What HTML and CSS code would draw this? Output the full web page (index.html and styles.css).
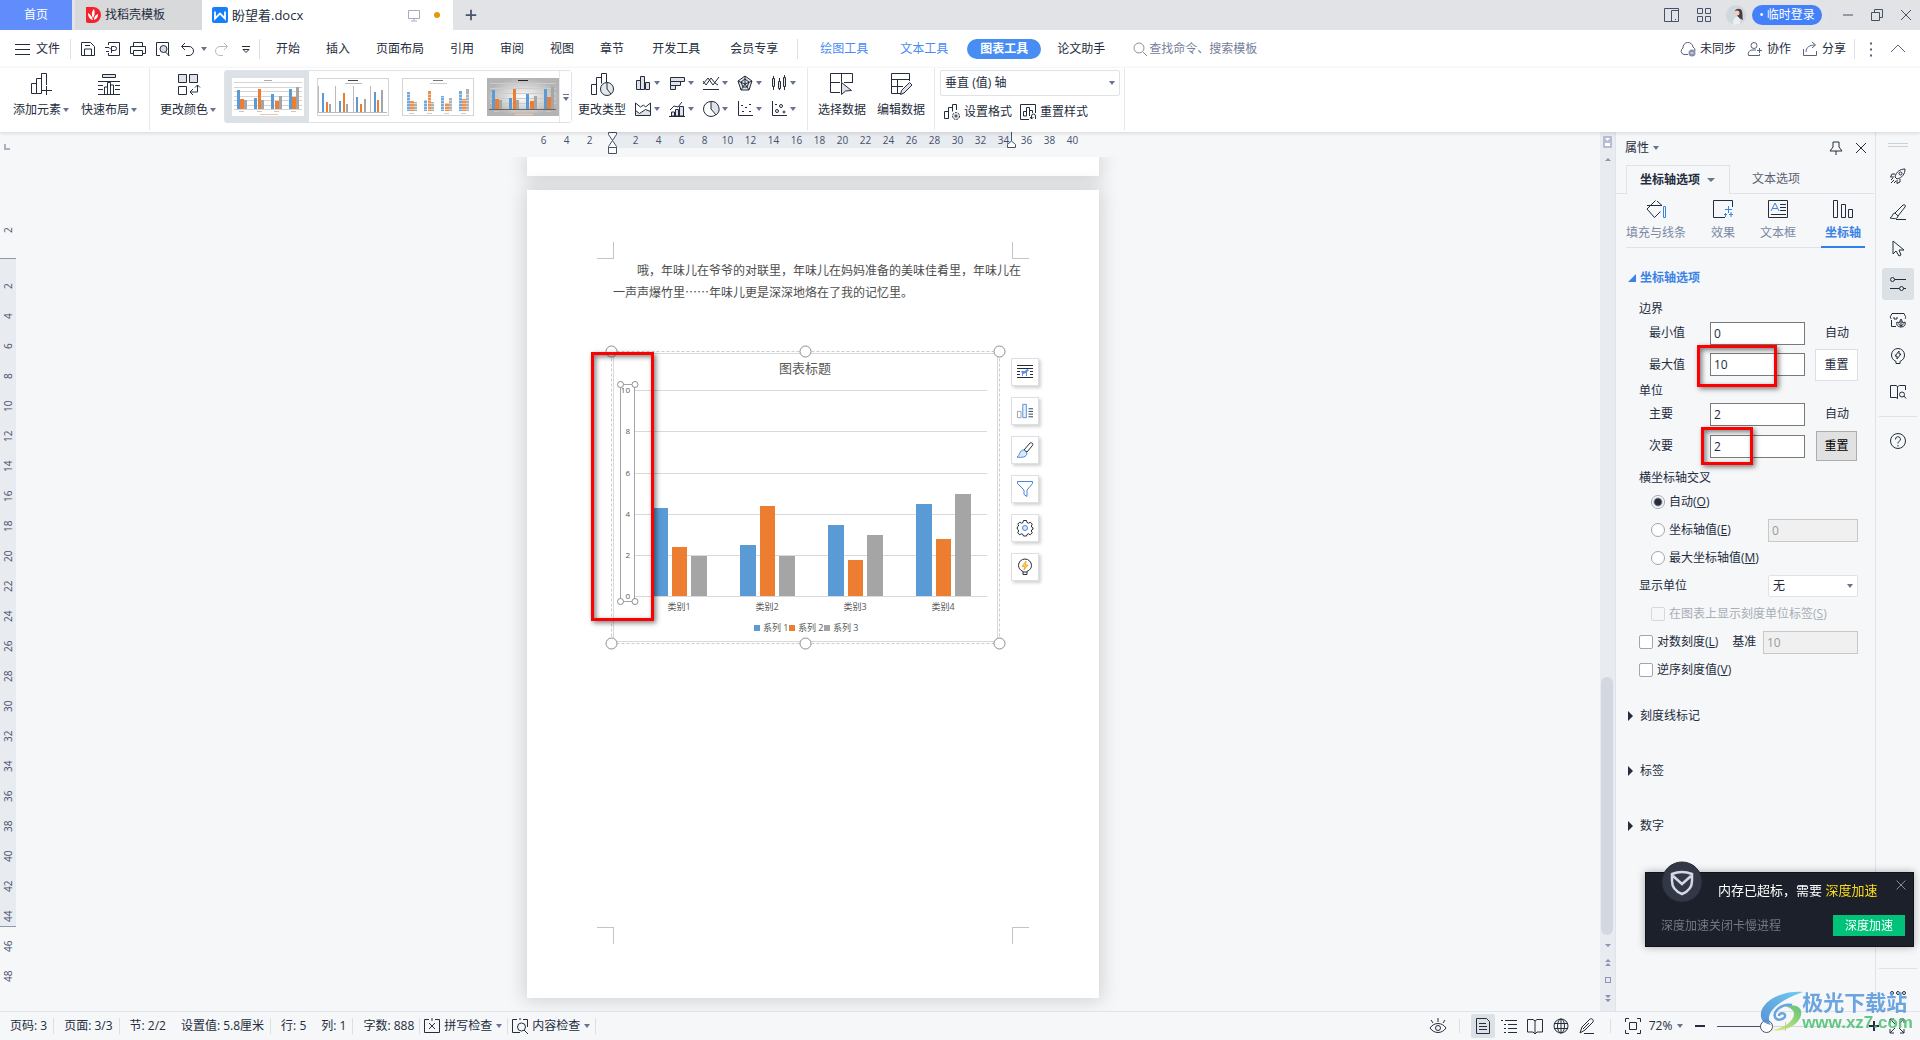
FILE: index.html
```html
<!DOCTYPE html>
<html lang="zh-CN">
<head>
<meta charset="utf-8">
<title>盼望着.docx</title>
<link rel="stylesheet" href="styles.css">
</head>
<body>
<svg class="defs" aria-hidden="true">
  <symbol id="bars" viewBox="0 0 72 38">
    <path fill="#5b9bd5" d="M5 31v-19h3v19zM22 31v-11h3v11zM39 31v-15h3v15zM57 31v-20h3v20z"/>
    <path fill="#ed7d31" d="M8 31v-10h4v10zM26 31v-20h3v20zM43 31v-8h4v8zM60 31v-12h4v12z"/>
    <path fill="#a5a5a5" d="M12 31v-9h3v9zM29 31v-9h3v9zM47 31v-13h3v13zM64 31v-22h3v22z"/>
    <path stroke="#c8c8c8" d="M7 33.500h5M25 33.500h5M42 33.500h5M59 33.500h5"/>
    <path stroke="#f2c5a5" d="M28 36.500h18"/>
  </symbol>
  <symbol id="thinbars" viewBox="0 0 72 38">
    <path fill="#5b9bd5" d="M5 34v-19h2v19zM22 34v-11h2v11zM39 34v-15h2v15zM57 34v-20h2v20z"/>
    <path fill="#ed7d31" d="M9 34v-10h2v10zM26 34v-19h2v19zM43 34v-8h2v8zM60 34v-12h2v12z"/>
    <path fill="#a5a5a5" d="M12 34v-8h2v8zM29 34v-8h2v8zM47 34v-13h2v13zM64 34v-22h2v22z"/>
  </symbol>
</svg>

<header class="titlebar">
  <button class="tab home">首页</button>
  <button class="tab template"><svg class="logo" viewBox="0 0 16 16"><path fill="#f5222d" d="M1 0h7a8 8 0 0 1 0 16H3a2 2 0 0 1-2-2z"/><path fill="#fff" d="M8 13C4 12 3 9 3 6c2 1 4 3 5 7zM8 11C6 7 7 4 9 2c1 3 1 6-1 9zM9 13c0-3 1-5 4-6 0 3-1 5-4 6z"/></svg>找稻壳模板</button>
  <button class="tab doc"><svg class="logo" viewBox="0 0 16 16"><rect width="16" height="16" rx="2" fill="#1680fb"/><path fill="none" stroke="#fff" stroke-width="1.800" d="M3 4.500v7l5-5 5 5v-7"/></svg><span>盼望着.docx</span><svg class="icon screen" viewBox="0 0 16 16"><path d="M2.500 3.500h11v8h-11zM8 11.500v2M5 14h6"/></svg><i class="dot"></i></button>
  <button class="newtab" aria-label="新建"><svg class="icon bold" viewBox="0 0 16 16"><path d="M8 2v12M2 8h12"/></svg></button>
  <div class="window-tools">
    <svg class="icon" viewBox="0 0 16 16"><path d="M.5 1.500h14v13H.5zM7.500 14V3.500h7M11 12.500h1"/></svg>
    <svg class="icon grid" viewBox="0 0 16 16"><path d="M1.500 1.500h5v5h-5zM9.500 1.500h5v5h-5zM1.500 9.500h5v5h-5zM9.500 9.500h5v5h-5z"/></svg>
    <svg class="avatar" viewBox="0 0 20 20"><circle cx="10" cy="10" r="10" fill="#cfd8dc"/><path fill="#4a3c3c" d="M9 6c1-3 6-3 7 0 1 4 0 6 1 9l-4-2-3-4z"/><circle cx="11" cy="8" r="2.500" fill="#f0cdbd"/><path fill="#e8f1f4" d="M7 20c0-6 2-9 5-8 2 1 2 5 2 7z"/></svg>
    <button class="login">• 临时登录</button>
    <i class="sep"></i>
    <button class="win" aria-label="最小化"><svg class="icon" viewBox="0 0 16 16"><path d="M3 8h10"/></svg></button>
    <button class="win" aria-label="还原"><svg class="icon" viewBox="0 0 16 16"><path d="M2.500 5.500h8v8h-8zM5.500 5.500v-3h8v8h-3"/></svg></button>
    <button class="win" aria-label="关闭"><svg class="icon" viewBox="0 0 16 16"><path d="M3 3l10 10M13 3L3 13"/></svg></button>
  </div>
</header>

<nav class="menubar">
  <button class="file"><svg class="icon" viewBox="0 0 16 16"><path d="M0 3.500h15M0 8.500h15M0 13.500h15"/></svg>文件</button>
  <i class="sep"></i>
  <div class="quick">
    <svg class="icon" viewBox="0 0 16 16"><path d="M1.500 1.500h9l4 4v9h-13zM4.500 14v-6h7v6M5 4.500h5"/></svg>
    <svg class="icon" viewBox="0 0 16 16"><path d="M3.500 4V1.500h11v13h-11V12M0 6.500h4l2 2M6.500 12V5.500h3a2 2 0 0 1 0 4h-3M1 10.500h3"/></svg>
    <svg class="icon" viewBox="0 0 16 16"><path d="M3.500 5V1.500h9V5M3.500 12.500h-3v-7h15v7h-3M3.500 9.500h9v5h-9z"/></svg>
    <svg class="icon" viewBox="0 0 16 16"><path d="M5 14.500H1.500v-13h12v13M10.500 11l4 4"/><circle cx="8.500" cy="8" r="3.500" fill="#d8dce1"/></svg>
    <svg class="icon" viewBox="0 0 16 16"><path d="M5 2L1.500 5.500 5 9M2 5.500h7a4 4 0 0 1 0 9H6"/></svg>
    <i class="caret"></i>
    <svg class="icon faded" viewBox="0 0 16 16"><path d="M11 2l3.500 3.500L11 9M14 5.500H7a4 4 0 0 0 0 9h3"/></svg>
    <svg class="icon" viewBox="0 0 16 16"><path d="M4 5.500h8M5 8.500l3 3 3-3z"/></svg>
  </div>
  <i class="sep"></i>
  <div class="menus">
    <button>开始</button><button>插入</button><button>页面布局</button><button>引用</button><button>审阅</button><button>视图</button><button>章节</button><button class="wide">开发工具</button><button class="wide">会员专享</button>
  </div>
  <i class="sep"></i>
  <div class="context">
    <button>绘图工具</button><button>文本工具</button><button class="pill">图表工具</button><button class="plain">论文助手</button>
  </div>
  <label class="search"><svg class="icon" viewBox="0 0 16 16"><circle cx="7" cy="7" r="5"/><path d="M11 11l4 4"/></svg><input type="text" placeholder="查找命令、搜索模板"></label>
  <div class="share">
    <button><svg class="icon" viewBox="0 0 16 16"><path d="M8 13.500H4a3.500 3.500 0 0 1-1-6.500 5 5 0 0 1 10-1 4 4 0 0 1 2 4"/><circle cx="12" cy="12" r="3.500" fill="#8891b0" stroke="none"/><path stroke="#fff" d="M10.500 12h3"/></svg>未同步</button>
    <button><svg class="icon" viewBox="0 0 16 16"><circle cx="7" cy="4.500" r="3"/><path d="M9 9H5a4 4 0 0 0-3.500 5.500h11V13M10 9.500h5M12.500 7v5"/></svg>协作</button>
    <button><svg class="icon" viewBox="0 0 16 16"><path d="M1.500 8v6.500h13V10M4 11c0-5 4-7 9-7M10 1l3.500 3L10 7"/></svg>分享</button>
    <i class="sep"></i>
    <svg class="icon dots" viewBox="0 0 16 16"><path d="M7 2.500h2M7 8.500h2M7 14.500h2"/></svg>
    <svg class="icon" viewBox="0 0 16 16"><path d="M1 11l7-7 7 7"/></svg>
  </div>
</nav>

<section class="ribbon">
  <div class="group first">
    <button class="big"><svg class="icon24" viewBox="0 0 24 24"><path d="M2.500 21.500v-10h5v10zM7.500 21.500v-15h5v15zM12.500 13V1.500h5V13M17.500 14v9M13 18.500h10"/></svg><span>添加元素<i class="caret"></i></span></button>
    <button class="big"><svg class="icon24" viewBox="0 0 24 24"><path fill="#dfe3e8" d="M5.500 2.500h13v3h-13z"/><path d="M1 9.500h22M1 13.500h5M18 13.500h5M1 17.500h5M18 17.500h5M1 22.500h22M7.500 22v-7h3v7M10.500 22V10.500h3V22M13.500 22v-9h3v9"/></svg><span>快速布局<i class="caret"></i></span></button>
  </div>
  <div class="group gallery-group">
    <button class="big"><svg class="icon24" viewBox="0 0 24 24"><path fill="#dfe3e8" d="M2.500 2.500h8v8h-8zM13.500 2.500h8v8h-8z"/><path d="M2.500 14.500h8v8h-8zM21.500 13v7h-7M17 17l-3 3 3 3M19 15.500l2.500-2.500 2.500 2.500"/></svg><span>更改颜色<i class="caret"></i></span></button>
    <div class="gallery">
      <button class="thumb on" aria-label="样式 1"><svg viewBox="0 0 72 38"><rect width="72" height="38" fill="#fff"/><path stroke="#d4d4d4" d="M2 4.500h68M2 9.500h68M2 13.500h68M2 18.500h68M2 22.500h68M2 27.500h68M2 31.500h68"/><path stroke="#aaa" d="M32 2.500h8"/><use href="#bars" width="72" height="38"/></svg></button>
      <button class="thumb" aria-label="样式 2"><svg viewBox="0 0 72 38"><rect x=".5" y=".5" width="71" height="37" fill="#fff" stroke="#d4d4d4"/><path stroke="#444" d="M31 2.500h10"/><path stroke="#bbb" d="M28 5.500h17M1.500 8v27M18.500 8v27M36.500 8v27M53.500 8v27M2 34.500h68"/><use href="#thinbars" width="72" height="38"/></svg></button>
      <button class="thumb" aria-label="样式 3"><svg viewBox="0 0 72 38"><rect x=".5" y=".5" width="71" height="37" fill="#fff" stroke="#d4d4d4"/><path stroke="#777" d="M31 2.500h10"/><path stroke="#ccc" d="M28 5.500h17"/><g opacity=".85"><use href="#bars" y="2" width="72" height="38"/></g><path stroke="#fff" opacity=".5" d="M4 16.500h64M4 19.500h64M4 22.500h64M4 25.500h64M4 28.500h64M4 31.500h64"/></svg></button>
      <button class="thumb" aria-label="样式 4"><svg viewBox="0 0 72 38"><defs><radialGradient id="g"><stop offset="0" stop-color="#fff"/><stop offset="1" stop-color="#b4b4b4"/></radialGradient></defs><rect width="72" height="38" fill="url(#g)"/><path stroke="#222" d="M31 2.500h10"/><path stroke="#ccc" d="M3 5.500h66M3 10.500h66M3 15.500h66M3 20.500h66M3 25.500h66"/><use href="#bars" width="72" height="38"/><path stroke="#666" d="M2 31.500h67"/></svg></button>
      <button class="expand" aria-label="更多样式"><svg class="icon10" viewBox="0 0 10 10"><path d="M2 2.500h6"/><path class="fill" d="M2 5h6L5 9z"/></svg></button>
    </div>
    <button class="big type"><svg class="icon24" viewBox="0 0 24 24"><path d="M1.500 22.500v-10h5v10zM6.500 22.500v-17h5v6M11.500 10V1.500h5V10"/><circle cx="17" cy="17" r="6.500" fill="#e4e8ec"/><path d="M17 10.500V17l4 5"/></svg><span>更改类型</span></button>
    <div class="types">
      <button aria-label="柱形图"><svg class="icon" viewBox="0 0 16 16"><path fill="#dfe3e8" d="M1.500 14.500v-9h4v9zM5.500 14.500v-13h4v13zM10.500 14.500v-7h4v7z"/></svg><i class="caret"></i></button>
      <button aria-label="条形图"><svg class="icon" viewBox="0 0 16 16"><path fill="#dfe3e8" d="M1.500 2.500h14v4h-14zM1.500 6.500h10v4h-10zM1.500 10.500h5v4h-5z"/></svg><i class="caret"></i></button>
      <button aria-label="折线图"><svg class="icon" viewBox="0 0 16 16"><path d="M0 14.500h16M0 9l5-6 5 7 6-8M0 6l3 4 5-7 4 5 3 2"/></svg><i class="caret"></i></button>
      <button aria-label="雷达图"><svg class="icon" viewBox="0 0 16 16"><path fill="#dfe3e8" d="M8 1l7 5-3 9H4L1 6z"/><path d="M8 4l4 3-2 5H6L4 7zM8 1v8M1 6l7 3 7-3M4 15l4-6 4 6"/></svg><i class="caret"></i></button>
      <button aria-label="股价图"><svg class="icon" viewBox="0 0 16 16"><path fill="#dfe3e8" d="M1.500 3.500h2v8h-2zM7.500 6.500h2v7h-2zM12.500 2.500h2v9h-2z"/><path d="M2.500 1v2M2.500 12v3M8.500 3v3M8.500 14v1M13.500 0v2M13.500 12v3"/></svg><i class="caret"></i></button>
      <button aria-label="面积图"><svg class="icon" viewBox="0 0 16 16"><path fill="#dfe3e8" d="M.5 9.500l4 3 6-4 5 2v4H.5z"/><path d="M.5 14V2l5 4 3-2 2 2 5-4v12"/></svg><i class="caret"></i></button>
      <button aria-label="组合图"><svg class="icon" viewBox="0 0 16 16"><path fill="#dfe3e8" d="M2.500 15v-4h3v4zM6.500 15V8.500h3V15zM10.500 15V5.500h4V15z"/><path d="M1 9l4-4 4 1 4-5M0 15.500h16"/></svg><i class="caret"></i></button>
      <button aria-label="饼图"><svg class="icon" viewBox="0 0 16 16"><circle cx="8" cy="8" r="7.500"/><path fill="#dfe3e8" d="M8 .5V8l5 6A7.500 7.500 0 0 0 8 .5z"/></svg><i class="caret"></i></button>
      <button aria-label="散点图"><svg class="icon" viewBox="0 0 16 16"><path d="M1.500 0v14.500H16M5 10.500h2M8 6.500h2M12 3.500h2M12 10.500h2M4 4.500h2"/></svg><i class="caret"></i></button>
      <button aria-label="气泡图"><svg class="icon" viewBox="0 0 16 16"><path d="M1.500 0v14.500H16M4 3.500h2"/><circle cx="6" cy="10" r="1.500"/><circle cx="10" cy="5" r="1.500"/><circle cx="13" cy="11" r="1"/></svg><i class="caret"></i></button>
    </div>
  </div>
  <div class="group data">
    <button class="big"><svg class="icon24" viewBox="0 0 24 24"><path d="M10 20.500H.5v-19h22V11M.5 10.500H10M11.500 2v8M14 10.500h8"/><path fill="#dfe3e8" d="M11.500 10.500v12l4-3.500 6-.5z"/></svg><span>选择数据</span></button>
    <button class="big"><svg class="icon24" viewBox="0 0 24 24"><path d="M12 21.500H2.500v-20h18V9M3 7.500h17M3 14.500h11M8.500 8v13"/><path fill="#dfe3e8" d="M11.500 22.500l1-4 8-8 2.500 2.500-8 8z"/></svg><span>编辑数据</span></button>
  </div>
  <div class="group format">
    <select aria-label="图表元素"><option>垂直 (值) 轴</option></select>
    <div class="format-row">
      <button><svg class="icon" viewBox="0 0 16 16"><path d="M.5 14.500v-7h4v7zM4.500 14.500v-11h4v4M8.500 6V.5h4V6"/><circle cx="12" cy="12" r="3.500" fill="#dfe3e8" stroke-dasharray="2 1"/><circle cx="12" cy="12" r="1"/></svg>设置格式</button>
      <button><svg class="icon" viewBox="0 0 16 16"><path d="M9 15.500H.5V.5h15V9M3.500 12V7.500h3V12zM6.500 12V3.500h3V12M9.500 9V6.500h3V9M11.500 15v-3a2 2 0 0 1 4 0v3M10 13l1.500 2 2-2"/></svg>重置样式</button>
    </div>
  </div>
</section>

<main class="workspace">
  <div class="vruler">
    <i class="corner"></i>
    <span>2</span>
    <div class="vband"><span>2</span><span>4</span><span>6</span><span>8</span><span>10</span><span>12</span><span>14</span><span>16</span><span>18</span><span>20</span><span>22</span><span>24</span><span>26</span><span>28</span><span>30</span><span>32</span><span>34</span><span>36</span><span>38</span><span>40</span><span>42</span><span>44</span></div>
    <span>46</span><span>48</span>
  </div>

  <div class="canvas">
    <div class="hruler">
      <span>6</span><span>4</span><span>2</span><span><svg class="marker" viewBox="0 0 9 25"><path d="M.5.500h8v2l-4 6 4 6v1h-8v-1l4-6-4-6zM.5 15.500h8v6h-8z"/></svg></span><span>2</span><span>4</span><span>6</span><span>8</span><span>10</span><span>12</span><span>14</span><span>16</span><span>18</span><span>20</span><span>22</span><span>24</span><span>26</span><span>28</span><span>30</span><span>32</span><span class="edge">34<svg class="marker short" viewBox="0 0 9 16"><path d="M4.500 0v9M.5 15.500v-3l4-3.500 4 3.500v3z"/></svg></span><span>36</span><span>38</span><span>40</span>
    </div>
    <div class="pages">
      <div class="page previous"></div>
      <article class="page">
        <i class="mark tl"></i><i class="mark tr"></i><i class="mark bl"></i><i class="mark br"></i>
        <p>哦，年味儿在爷爷的对联里，年味儿在妈妈准备的美味佳肴里，年味儿在<br>一声声爆竹里……年味儿更是深深地烙在了我的记忆里。</p>
        <figure>
          <svg class="chart" viewBox="591 345 420 305">
            <rect x="611.500" y="351.500" width="388" height="292" fill="none" stroke="#ccc" stroke-dasharray="3 2"/>
            <rect x="613.500" y="353.500" width="384" height="288" fill="none" stroke="#d9d9d9"/>
            <path stroke="#d9d9d9" d="M635 390.500h352M635 431.500h352M635 473.500h352M635 514.500h352M635 555.500h352M635 596.500h352"/>
            <path fill="#5b9bd5" d="M652 508h16v88h-16zM740 545h16v51h-16zM828 525h16v71h-16zM916 504h16v92h-16z"/>
            <path fill="#ed7d31" d="M672 547h15v49h-15zM760 506h15v90h-15zM848 560h15v36h-15zM936 539h15v57h-15z"/>
            <path fill="#a5a5a5" d="M691 556h16v40h-16zM779 556h16v40h-16zM867 535h16v61h-16zM955 494h16v102h-16z"/>
            <text class="chart-title" x="805" y="373">图表标题</text>
            <g class="tick"><text x="630" y="393">10</text><text x="630" y="434">8</text><text x="630" y="476">6</text><text x="630" y="517">4</text><text x="630" y="558">2</text><text x="630" y="599">0</text></g>
            <g class="cat"><text x="679" y="610">类别1</text><text x="767" y="610">类别2</text><text x="855" y="610">类别3</text><text x="943" y="610">类别4</text></g>
            <path fill="#5b9bd5" d="M754 625h6v6h-6z"/><path fill="#ed7d31" d="M789 625h6v6h-6z"/><path fill="#a5a5a5" d="M824 625h6v6h-6z"/>
            <g class="key"><text x="763" y="631">系列 1</text><text x="798" y="631">系列 2</text><text x="833" y="631">系列 3</text></g>
            <rect x="620.500" y="384.500" width="14" height="217" fill="none" stroke="#a3a3b0"/>
            <g fill="#fff" stroke="#8c8c8c"><circle cx="620.500" cy="384.500" r="3"/><circle cx="635" cy="384.500" r="3"/><circle cx="620.500" cy="601.500" r="3"/><circle cx="635" cy="601.500" r="3"/>
            <circle cx="611.500" cy="351.500" r="5.500"/><circle cx="805.500" cy="351.500" r="5.500"/><circle cx="999.500" cy="351.500" r="5.500"/><circle cx="611.500" cy="643.500" r="5.500"/><circle cx="805.500" cy="643.500" r="5.500"/><circle cx="999.500" cy="643.500" r="5.500"/></g>
          </svg>
          <div class="chart-tools">
            <button aria-label="布局选项"><svg class="icon" viewBox="0 0 16 16"><path d="M0 1.500h16M0 4.500h16M0 7.500h3M13 7.500h3M0 10.500h3M13 10.500h3M0 13.500h16"/><path fill="#5b8def" stroke="none" d="M4 7h4l2-2 2 1-2 2v4H9V9L6 10v2H5V9z"/></svg></button>
            <button aria-label="图表元素"><svg class="icon" viewBox="0 0 18 16"><path stroke="#999" d="M.5 8.500h4v7h-4z"/><path stroke="#4a86d8" fill="#e8f1fd" d="M6.500.500h4v15h-4z"/><path d="M13 5.500h5M13 8.500h5M13 11.500h5M13 14.500h5"/></svg></button>
            <button aria-label="图表样式"><svg class="icon" viewBox="0 0 16 16"><path d="M7 8l6-7c2-1 4 1 2 3l-5 6z"/><path stroke="#4a86d8" fill="#dbe9fb" d="M7 8l3 3c0 4-5 5-10 4 3-1 2-7 7-7z"/></svg></button>
            <button aria-label="图表筛选器"><svg class="icon" viewBox="0 0 16 16"><path stroke="#4a86d8" d="M.5.500h15v2L10 9v6.500l-3-2V9L.5 2.500z"/></svg></button>
            <button aria-label="设置"><svg class="icon" viewBox="0 0 16 16"><path d="M6.500.500h3l.5 2 1.500.7 1.800-1 2 2-1 1.800.7 1.500 1 .3v1.400l-1 .3-.7 1.500 1 1.800-2 2-1.800-1-1.500.7-.5 1.500h-3l-.5-1.500-1.500-.7-1.800 1-2-2 1-1.800L1 9.500.3 9V7L1 6.500l.7-1.500-1-.8 2-2 1.800 1L6 2.500z"/><circle cx="8" cy="8" r="2.500" stroke="#4a86d8" fill="#dbe9fb"/></svg></button>
            <button aria-label="智能建议"><svg class="icon" viewBox="0 0 16 16"><path d="M6 12.500C3 11 1.500 9 1.500 6.500a6.500 6.500 0 0 1 13 0c0 2.500-1.500 4.500-4.500 6v3H6zM6 13h4"/><path fill="#ffd83a" stroke="#e0962a" stroke-width=".7" d="M9 2L5 7.500h2.500L7 11l4-5H8.500z"/></svg></button>
          </div>
          <div class="callout axis"></div>
        </figure>
      </article>
    </div>
  </div>

  <div class="scrollbar">
    <svg viewBox="0 0 14 30"><rect x="3" y="4" width="9" height="12" rx="1" fill="#b5bdd3"/><path fill="#fff" d="M5 6h5l-2.500 3zM5 11h5v3H5z"/><path fill="#8a94b3" d="M5 29l3-3 3 3z"/></svg>
    <i class="thumb-bar"></i>
    <svg class="nav" viewBox="0 0 14 76"><path fill="#8a94b3" d="M5 9h6l-3 3zM5 27l3-3 3 3zM5 31l3-3 3 3zM5 60h6l-3 3zM5 64h6l-3 3z"/><rect x="5.500" y="42.500" width="5" height="5" fill="none" stroke="#8a94b3"/></svg>
  </div>

  <aside class="panel">
    <div class="panel-title"><span>属性<i class="caret"></i></span><svg class="icon" viewBox="0 0 16 16"><path d="M5 2h6v5l3 4H2l3-4zM8 11v4"/></svg><svg class="icon" viewBox="0 0 16 16"><path d="M3 3l10 10M13 3L3 13"/></svg></div>
    <div class="panel-tabs"><button class="on">坐标轴选项<i class="caret"></i></button><button>文本选项</button></div>
    <div class="panel-kinds">
      <button><svg class="icon20" viewBox="0 0 20 20"><path d="M9.500 1.500L1 10l7.500 8.500 6-6M1 6.500h15L11 2"/><path class="blue" d="M17.500 7.500h2v11h-2z"/></svg>填充与线条</button>
      <button><svg class="icon20" viewBox="0 0 20 20"><path d="M12 18.500H.5v-17h19V8"/><path class="blue" d="M15.500 7v7M12 10.500h7M11 15.500h3M12.500 14v4M16 15.500h4M18 13v5"/></svg>效果</button>
      <button><svg class="icon20" viewBox="0 0 20 20"><path d="M.5 1.500h19v17H.5zM12 5.500h6M12 8.500h6M12 11.500h6M3 15.500h15"/><path class="blue" d="M3 12l4-8 4 8M4.500 9.500h5"/></svg>文本框</button>
      <button class="on"><svg class="icon20" viewBox="0 0 20 20"><path d="M.5 1.500h4v17h-4zM8.500 5.500h4v13h-4zM15.500 10.500h4v8h-4z"/></svg>坐标轴</button>
    </div>
    <form class="options">
      <h2><i class="open"></i>坐标轴选项</h2>
      <div class="row h24">边界</div>
      <div class="row h24 value"><label for="min">最小值</label><span class="field"><input id="min" value="0"></span><span class="auto">自动</span></div>
      <div class="row h39 value"><label for="max">最大值</label><span class="field"><input id="max" value="10"><i class="callout max"></i></span><button type="button">重置</button></div>
      <div class="row h14">单位</div>
      <div class="row h32 value"><label for="major">主要</label><span class="field"><input id="major" value="2"></span><span class="auto">自动</span></div>
      <div class="row h32 value"><label for="minor">次要</label><span class="field"><input id="minor" value="2"><i class="callout minor"></i></span><button type="button" class="pressed">重置</button></div>
      <div class="row cross">横坐标轴交叉</div>
      <div class="row inset"><label><input type="radio" name="cross" checked>自动(<u>O</u>)</label></div>
      <div class="row inset"><label><input type="radio" name="cross">坐标轴值(<u>E</u>)</label><input class="off" value="0" disabled aria-label="坐标轴值"></div>
      <div class="row inset"><label><input type="radio" name="cross">最大坐标轴值(<u>M</u>)</label></div>
      <div class="row"><label for="unit">显示单位</label><select id="unit"><option>无</option></select></div>
      <div class="row inset muted"><label><input type="checkbox" disabled>在图表上显示刻度单位标签(<u>S</u>)</label></div>
      <div class="row"><label><input type="checkbox">对数刻度(<u>L</u>)</label><label class="base" for="base">基准</label><input id="base" class="off long" value="10" disabled></div>
      <div class="row"><label><input type="checkbox">逆序刻度值(<u>V</u>)</label></div>
      <div class="folds"><h3><i></i>刻度线标记</h3><h3><i></i>标签</h3><h3><i></i>数字</h3></div>
    </form>
  </aside>

  <div class="sidebar">
    <svg class="grip" viewBox="0 0 20 6"><path d="M0 1.500h20M0 4.500h20"/></svg>
    <button aria-label="火箭"><svg class="icon" viewBox="0 0 16 16"><path d="M5 9C6 4 10 1 15 1c0 5-3 9-8 10zM5 6H2L.5 9 4 9M10 11v3l-3 1.500V12M1 12l2-2M1 15l3-3M4 15l2-2"/><circle cx="10.500" cy="5.500" r="1.500"/></svg></button>
    <button aria-label="画笔"><svg class="icon" viewBox="0 0 16 16"><path d="M5 9l8-8c2-1 3 1 2 2l-7 9M5 9c-3 0-2 4-5 5 4 1 8 1 8-2zM6 15.500h10"/></svg></button>
    <button aria-label="选择"><svg class="icon" viewBox="0 0 16 16"><path d="M3 1v13l3-3 3 5 2-1-2-5h5z"/></svg></button>
    <button class="on" aria-label="属性"><svg class="icon" viewBox="0 0 16 16"><circle cx="2.500" cy="3.500" r="2"/><circle cx="11.500" cy="12.500" r="2"/><path d="M4.500 3.500H16M0 12.500h9.500M13.500 12.500H16"/></svg></button>
    <button aria-label="稻壳"><svg class="icon" viewBox="0 0 16 16"><path d="M6 14.500H1.500V8M1.500 7C0 6 0 4 1 3.500l1-2h12l1 2c1 1 .5 3 0 3.500M4 5v2h3V5"/><path fill="#dfe3e8" d="M11 15c-4 0-5-3-4-5l2 1 2-4 2 4 2-1c1 3-1 5-4 5zM11 9v6M8.500 12l2.500 2 2.500-2"/></svg></button>
    <button aria-label="灵感"><svg class="icon" viewBox="0 0 16 16"><path d="M6 13.500C3 12 1.500 10 1.500 7a6.500 6.500 0 0 1 13 0c0 3-1.500 5-4.500 6.500v2H6zM9 3L5 8h2v3l4-5H9z"/></svg></button>
    <button aria-label="查阅"><svg class="icon" viewBox="0 0 16 16"><path d="M7.500 2.500v12M8 14.500l-2-1H.5v-12H6l1.500 1 2-1h6V6"/><circle cx="12" cy="10.500" r="2.500"/><path d="M14 12l2 2.500"/></svg></button>
    <hr>
    <button aria-label="帮助"><svg class="icon" viewBox="0 0 16 16"><circle cx="8" cy="8" r="7.500"/><path d="M5.500 6.500a2.500 2.500 0 1 1 3.500 2c-1 .5-1 1-1 2M8 12v1.500"/></svg></button>
    <hr class="low">
    <button aria-label="更多"><svg class="icon" viewBox="0 0 16 16"><circle cx="2" cy="8" r="1.500"/><circle cx="8" cy="8" r="1.500"/><circle cx="14" cy="8" r="1.500"/></svg></button>
  </div>
</main>

<footer class="status">
  <span class="cell">页码: 3</span><span class="cell">页面: 3/3</span><span class="cell"><span>节: 2/2</span><span>设置值: 5.8厘米</span></span><span class="cell"><span>行: 5</span><span>列: 1</span></span><span class="cell last">字数: 888</span>
  <button class="check"><svg class="icon" viewBox="0 0 16 16"><path d="M5 1.500H.5v13h15v-13H11M5 5l6 6M11 5l-6 6M8 0v3"/></svg>拼写检查<i class="caret"></i></button>
  <button class="check"><svg class="icon" viewBox="0 0 16 16"><path d="M5 1.500H.5v13H8M15.500 9V1.500H11M12 12l4 4M8 0v2"/><circle cx="9.500" cy="9" r="4"/></svg>内容检查<i class="caret"></i></button>
  <div class="view">
    <svg class="icon eye" viewBox="0 0 16 16"><path d="M0 10c4-6 12-6 16 0-4 6-12 6-16 0zM8 4V0M3 5L1 2M13 5l2-3"/><circle cx="8" cy="10" r="2.500"/></svg>
    <i class="sep"></i>
    <button class="on" aria-label="页面视图"><svg class="icon" viewBox="0 0 16 16"><path d="M1.500.500h10l3 3v12h-13zM4 5.500h7M4 8.500h8M4 11.500h8"/></svg></button>
    <button aria-label="大纲"><svg class="icon" viewBox="0 0 16 16"><path d="M0 2.500h2M4 2.500h12M3 6.500h2M7 6.500h9M3 10.500h2M7 10.500h9M3 14.500h2M7 14.500h9"/></svg></button>
    <button aria-label="阅读"><svg class="icon" viewBox="0 0 16 16"><path d="M8 3v13l-2-2H.5V1.500H6L8 3l2-1.500h5.500V14H10l-2 2"/></svg></button>
    <button aria-label="Web"><svg class="icon" viewBox="0 0 16 16"><circle cx="8" cy="8" r="7"/><ellipse cx="8" cy="8" rx="3.500" ry="7"/><path d="M1 5.500h14M1 10.500h14M8 1v14"/></svg></button>
    <button aria-label="写作"><svg class="icon" viewBox="0 0 16 16"><path d="M1 15l2-6 8-8c2-1 4 1 3 3l-8 8zM4 11l6-6M5 15.500h10"/></svg></button>
    <i class="sep wide"></i>
    <svg class="icon" viewBox="0 0 16 16"><path d="M.5 4V.500H4M12 .5h3.500V4M15.500 12v3.500H12M4 15.500H.5V12M4.500 4.500h7v7h-7z"/></svg>
    <button class="zoom">72%<i class="caret"></i></button>
    <button class="step" aria-label="缩小"><svg class="icon bold" viewBox="0 0 16 16"><path d="M3 8h10"/></svg></button>
    <input class="slider" type="range" min="0" max="100" value="33" aria-label="缩放">
    <button class="step" aria-label="放大"><svg class="icon bold" viewBox="0 0 16 16"><path d="M3 8h10M8 3v10"/></svg></button>
    <svg class="icon full" viewBox="0 0 16 16"><path d="M1 5V1h4M1 1l5 5M11 1h4v4M15 1l-5 5M15 11v4h-4M15 15l-5-5M5 15H1v-4M1 15l5-5"/></svg>
  </div>
</footer>

<div class="toast">
  <svg class="shield" viewBox="0 0 42 42"><circle cx="21" cy="21" r="20" fill="#333846" stroke="#242935"/><path fill="none" stroke="#d5d8e4" stroke-width="2.500" d="M11 13q10-4 20 0v7c0 7-5 11-10 13-5-2-10-6-10-13zM12 15l9 8 9-8"/></svg>
  <strong>内存已超标，需要 <em>深度加速</em></strong>
  <button class="dismiss" aria-label="关闭提示"><svg class="icon10" viewBox="0 0 10 10"><path d="M.5.500l9 9M9.500.500l-9 9"/></svg></button>
  <div class="toast-row"><span>深度加速关闭卡慢进程</span><button>深度加速</button></div>
</div>

<div class="watermark">
  <svg viewBox="0 0 44 42"><defs><linearGradient id="wb" x1="0" y1="1" x2="1" y2="0"><stop offset="0" stop-color="#4a86cf"/><stop offset="1" stop-color="#62c6f2"/></linearGradient><linearGradient id="wg" x1="1" y1="0" x2="0" y2="1"><stop offset="0" stop-color="#4cba72"/><stop offset="1" stop-color="#e3ea66"/></linearGradient></defs><path fill="url(#wb)" d="M43 1C20-1-1 12 1 26c1 5 5 7 10 8-6-8 0-22 32-33z"/><path fill="url(#wg)" d="M25 15c14-3 19 4 15 12-4 9-18 14-28 12 12-2 22-9 22-16 0-4-4-6-9-8z"/><path fill="none" stroke="#5a9bdc" stroke-width="2.500" d="M32 14c-10-2-19 6-17 12 2 5 11 2 10-2-1-3-6-2-6 1"/></svg>
  <div><b>极光下载站</b><span>www.xz7.com</span></div>
</div>
</body>
</html>
```
FILE: styles.css
```css
* { box-sizing: border-box; }
html, body { height: 100%; margin: 0; }
body {
  display: flex; flex-direction: column; overflow: hidden;
  font: 12px/16px "Open Sans", "Noto Sans CJK SC", sans-serif;
  color: #242c3d; background: #f5f7f9;
}
button, input, select { font: inherit; color: inherit; margin: 0; }
button { display: flex; align-items: center; padding: 0; border: 0; background: none; white-space: nowrap; }
i, em { font-style: normal; }
.defs { position: absolute; width: 0; height: 0; }
svg { display: block; flex: none; }
.icon, .icon24, .icon20, .icon10 { fill: none; stroke: currentColor; stroke-width: 1; overflow: visible; }
.icon { width: 16px; height: 16px; }
.icon24 { width: 24px; height: 24px; }
.icon20 { width: 20px; height: 20px; }
.icon10 { width: 10px; height: 10px; }
.icon10 .fill { fill: #67738f; stroke: none; }
.bold { stroke-width: 2; }
.blue { stroke: #3b82e6; }
.caret { flex: none; display: inline-block; width: 6px; border: 3px solid transparent; border-top: 4px solid #67738f; border-bottom: 0; vertical-align: middle; }
.sep { flex: none; width: 1px; height: 20px; background: #dcdfe4; }

/* Title bar */
.titlebar { flex: none; display: flex; height: 30px; background: #e1e3e6; }
.tab { flex: none; font-size: 13px; }
.home { width: 72px; justify-content: center; color: #fff; background: #608dfb; font-size: 12px; margin-right: 3px; }
.template { width: 127px; padding-left: 10px; gap: 4px; background: #d8d9db; font-size: 12px; }
.doc { width: 251px; padding: 0 13px 0 10px; gap: 4px; background: #fff; }
.doc span { font-size: 12px; }
.doc span { font-size: 13px; }
.logo { width: 16px; height: 16px; }
.screen { margin-left: auto; color: #a3adbf; }
.dot { width: 6px; height: 6px; margin-left: 8px; border-radius: 50%; background: #e39b05; }
.newtab { padding: 0 11px; color: #46536c; }
.newtab .icon { width: 14px; height: 14px; }
.window-tools { display: flex; align-items: center; gap: 16px; margin-left: auto; padding-right: 5px; color: #465069; }
.window-tools .grid { margin-right: -2px; }
.avatar { width: 20px; height: 20px; margin-right: -10px; }
.login { height: 20px; width: 70px; justify-content: center; border-radius: 10px; background: #4380f9; color: #fff; margin-right: -8px; }
.window-tools .sep { margin-right: -8px; }
.win { margin-right: -5px; padding: 0 1px; }
.win:last-child { margin-right: 0; }

/* Menu bar */
.menubar { flex: none; display: flex; align-items: center; height: 38px; padding-left: 15px; background: #fff; }
.file { gap: 5px; margin-right: 10px; }
.quick { display: flex; align-items: center; gap: 9px; padding: 0 5px 0 9px; }
.quick .caret { margin: 0 -3px 0 -4px; }
.faded { color: #b5bac2; }
.menus { display: flex; padding: 0 4px 0 3px; }
.menus button { padding: 0 13px; }
.menus .wide { padding: 0 15px; }
.context { display: flex; align-items: center; padding-left: 6px; color: #488cf5; }
.context button { padding: 0 16px; }
.context .pill { height: 20px; padding: 0 13px; margin-left: 3px; border-radius: 10px; background: #488df3; color: #fff; font-weight: 700; }
.context .plain { color: #242c3d; }
.search { display: flex; align-items: center; gap: 1px; margin-left: 11px; color: #8790a6; }
.search input { width: 120px; padding: 0; border: 0; background: none; }
.search input::placeholder { color: #75809a; opacity: 1; }
.share { display: flex; align-items: center; gap: 11px; margin-left: auto; padding-right: 14px; }
.share button { gap: 4px; }
.share .icon { color: #56617a; }
.share .sep { margin: 0 -3px; }
.dots { stroke-width: 2; }

/* Ribbon */
.ribbon { flex: none; position: relative; display: flex; height: 64px; background: #fff; box-shadow: 0 1px 4px rgba(0, 0, 0, .14); }
.group { display: flex; padding: 0 10px; border-right: 1px solid #e6e8eb; height: 62px; }
.first { gap: 12px; padding-left: 13px; padding-right: 12px; }
.gallery-group { padding-right: 2px; }
.big { flex-direction: column; gap: 6px; padding-top: 4px; }
.big span { display: flex; align-items: center; gap: 2px; }
.gallery { display: flex; margin: 2px 0 0 8px; width: 348px; height: 53px; border: 1px solid #dfe2e7; border-radius: 3px; }
.thumb { flex: none; width: 84px; height: 51px; padding-left: 7px; margin-right: 1px; }
.thumb svg { width: 72px; height: 38px; }
.thumb.on { background: #dce1e6; }
.expand { flex: 1; justify-content: center; border-left: 1px solid #e6e8eb; margin-left: -6px; background: #fff; color: #67738f; }
.type { margin: 0 9px 0 6px; }
.types { display: grid; grid-template-columns: repeat(5, 34px); grid-template-rows: 26px 26px; padding-top: 2px; }
.types button { gap: 3px; }
.data { gap: 11px; padding: 0 9px 0 10px; }
.format { flex-direction: column; gap: 8px; padding: 2px 4px 0 5px; width: 190px; }
select { appearance: none; border: 1px solid #dfe2e7; border-radius: 2px; background: #fff url("data:image/svg+xml,%3Csvg xmlns='http://www.w3.org/2000/svg' width='6' height='4'%3E%3Cpath fill='%2367738f' d='M0 0h6L3 4z'/%3E%3C/svg%3E") no-repeat right 4px center; }
.format select { width: 180px; height: 26px; padding: 0 4px; }
.format-row { display: flex; gap: 8px; padding-left: 4px; }
.format-row button { gap: 4px; }

/* Workspace */
.workspace { flex: 1; min-height: 0; display: flex; }
.vruler { flex: none; width: 16px; font: 10px/16px "Open Sans", sans-serif; color: #465069; }
.vruler span { display: flex; align-items: center; justify-content: center; width: 16px; height: 30px; writing-mode: vertical-rl; transform: rotate(180deg); }
.corner { display: block; width: 6px; height: 6px; margin: 12px 0 65px 4px; border: solid #aab1bf; border-width: 0 0 2px 2px; }
.vband { height: 669px; margin: 13px 0 4px; padding-top: 12px; background: #e8ebf0; border: solid #8e9ab2; border-width: 1px 0; }
.canvas { flex: 1; min-width: 0; display: flex; flex-direction: column; align-items: center; padding-left: 10px; overflow: hidden; }
.hruler { flex: none; display: flex; width: 572px; height: 25px; padding-left: 5px; font: 10px/16px "Open Sans", sans-serif; color: #465069; background: linear-gradient(90deg, transparent 86px, #e8ebf0 86px 484px, transparent 484px) no-repeat 0 0 / 100% 16px; }
.hruler span { flex: none; width: 23px; text-align: center; }
.hruler .edge { position: relative; }
.marker { width: 9px; height: 25px; margin-left: 7px; fill: #fff; stroke: #465069; }
.marker.short { position: absolute; left: 8px; top: 0; height: 16px; }
.pages { flex: 1; min-height: 0; width: 100%; overflow: hidden; display: flex; flex-direction: column; align-items: center; gap: 14px; }
.page { position: relative; flex: none; width: 572px; min-height: 808px; padding: 69px 0 0 86px; background: #fff; box-shadow: 0 0 18px 3px rgba(0, 0, 0, .15); }
.previous { min-height: 0; height: 19px; padding: 0; }
.page p { margin: 0; text-indent: 24px; white-space: nowrap; font: 12px/22px "Noto Sans CJK SC", sans-serif; color: #4d4d4d; }
.mark { position: absolute; width: 17px; height: 17px; border: 0 solid #c4c4c4; }
.tl { left: 70px; top: 52px; border-width: 0 1px 1px 0; }
.tr { left: 485px; top: 52px; border-width: 0 0 1px 1px; }
.bl { left: 70px; top: 737px; border-width: 1px 1px 0 0; }
.br { left: 485px; top: 737px; border-width: 1px 0 0 1px; }
figure { position: relative; display: flex; width: 450px; margin: 42px 0 0 -22px; }
.chart { width: 420px; height: 305px; font-family: "Open Sans", "Noto Sans CJK SC", sans-serif; fill: #595959; }
.chart-title { font-size: 13px; text-anchor: middle; }
.tick { font-size: 8px; text-anchor: end; }
.cat { font-size: 9px; text-anchor: middle; }
.key { font-size: 9px; }
.chart-tools { display: flex; flex-direction: column; gap: 11px; padding-top: 13px; }
.chart-tools button { width: 28px; height: 28px; justify-content: center; border: 1px solid #dedfe3; background: #fff; box-shadow: 2px 2px 3px rgba(0, 0, 0, .18); }
.callout { position: absolute; border: 3px solid #f00; box-shadow: 2px 2px 5px rgba(0, 0, 0, .5), inset 2px 2px 5px rgba(0, 0, 0, .5); pointer-events: none; }
.axis { left: 0; top: 7px; width: 63px; height: 269px; }

.scrollbar { flex: none; display: flex; flex-direction: column; width: 15px; background: #e8ebf0; }
.scrollbar svg { width: 14px; height: 30px; }
.thumb-bar { width: 12px; height: 258px; margin: auto 0 0 1px; border-radius: 6px; background: #d3d7e0; }
.scrollbar .nav { height: 76px; }

/* Property panel */
.panel { flex: none; width: 261px; border: solid #e0e3e9; border-width: 0 1px; }
.panel-title { display: flex; align-items: center; gap: 9px; height: 33px; padding: 0 6px 2px 9px; }
.panel-title span { margin-right: auto; }
.panel-title .caret { margin-left: 4px; }
.panel-tabs { display: flex; height: 29px; margin-right: 1px; }
.panel-tabs::before { content: ""; width: 10px; border-bottom: 1px solid #dfe3e9; }
.panel-tabs button { flex: 1; padding-left: 22px; border-bottom: 1px solid #dfe3e9; color: #5a6274; }
.panel-tabs .on { flex: none; width: 104px; padding-left: 13px; gap: 7px; border: 1px solid #dfe3e9; border-bottom: 0; font-weight: 700; color: #242c3d; }
.panel-tabs .caret { width: 8px; border-left-width: 4px; border-right-width: 4px; }
.panel-kinds { display: flex; justify-content: space-between; margin: 0 10px 0 10px; height: 54px; border-bottom: 1px solid #dfe3e9; }
.panel-kinds button { flex-direction: column; gap: 6px; padding-top: 5px; height: 54px; color: #7b88a3; border-bottom: 2px solid transparent; }
.panel-kinds .on { color: #3b82e6; font-weight: 700; padding-left: 4px; padding-right: 4px; border-color: #2f80ed; }
.panel-kinds svg { color: #242c3d; }
h2, h3 { display: flex; align-items: center; margin: 0; font-size: 12px; font-weight: 400; }
.options h2 { gap: 4px; height: 36px; margin: 12px 0 1px -11px; color: #3b82e6; font-weight: 700; }
.open { border: 4px solid transparent; border-right-color: #3b82e6; border-bottom-color: #3b82e6; }
.options { padding: 0 17px 0 23px; }
.row { display: flex; align-items: center; height: 28px; }
.row label { display: flex; align-items: center; white-space: nowrap; }
.h24 { height: 24px; }
.h39 { height: 39px; }
.h14 { height: 14px; }
.h32 { height: 32px; }
.cross { height: 26px; padding-top: 6px; }
.inset { padding-left: 12px; }
.value label { width: 71px; padding-left: 10px; }
.field { position: relative; width: 96px; }
.field input { display: block; width: 95px; height: 23px; padding: 0 3px; border: 1px solid #7a7a7a; background: #fff; }
.auto { margin-left: 19px; }
.value button { width: 43px; height: 32px; margin-left: 9px; justify-content: center; border: 1px solid #dcdfe6; background: #fff; }
.value .pressed { width: 41px; height: 30px; margin-left: 10px; background: #e1e1e1; border-color: #adadad; color: #000; }
.max { left: -13px; top: -8px; width: 80px; height: 42px; }
.minor { left: -9px; top: -8px; width: 52px; height: 38px; }
input[type="radio"], input[type="checkbox"] { appearance: none; flex: none; width: 14px; height: 14px; margin: 0 4px 0 0; border: 1px solid #a0a5b2; background: #fff; border-radius: 2px; }
input[type="radio"] { border-radius: 50%; }
input[type="radio"]:checked { background: radial-gradient(#242c3d 3px, #fff 5px); }
.off { width: 90px; height: 23px; margin-left: auto; padding: 0 3px; border: 1px solid #c8c8c8; background: #f0f0f0; color: #9a9a9a; }
.long { width: 95px; }
.base { margin-left: 14px; }
#unit { width: 90px; height: 22px; margin-left: auto; padding: 0 4px; }
.muted { color: #a9adb5; }
.muted input { border-color: #d5d8de; background: #f5f7f9; }
.folds { margin: 4px 0 0 -11px; }
.folds h3 { height: 55px; gap: 7px; }
.folds i { border: 5px solid transparent; border-left-color: #242c3d; border-right: 0; }

.sidebar { flex: none; display: flex; flex-direction: column; align-items: center; width: 44px; padding-right: 1px; }
.grip { width: 20px; height: 6px; margin: 10px 0 10px; stroke: #ccd0d8; }
.sidebar button { flex: none; width: 32px; height: 32px; justify-content: center; margin: 2px 0; border-radius: 3px; }
.sidebar .on { background: #dce1e6; }
.sidebar hr { width: 38px; height: 1px; margin: 6px 0; border: 0; background: #dfe3e9; }
.sidebar .low { margin-top: auto; }

/* Status bar */
.status { flex: none; display: flex; align-items: center; height: 29px; border-top: 1px solid #e0e3e8; }
.cell { display: flex; gap: 15px; padding: 0 6px 0 10px; border-right: 1px solid #dcdfe4; white-space: nowrap; }
.cell.last { padding-right: 5px; }
.check { gap: 4px; padding: 0 5px 0 4px; border-right: 1px solid #dcdfe4; }
.view { display: flex; align-items: center; margin-left: auto; padding-right: 15px; }
.view .sep { height: 14px; margin: 0 11px 0 13px; }
.view button { width: 26px; height: 24px; justify-content: center; border-radius: 2px; }
.view .on { background: #dce1e6; width: 24px; margin-right: 1px; }
.view .wide { margin: 0 14px 0 10px; }
.view .zoom { width: 50px; gap: 5px; }
.view .step { width: 18px; }
.slider { appearance: none; width: 144px; height: 14px; margin: 0 4px 0 8px; background: linear-gradient(#c3c9d4, #c3c9d4) no-repeat 68px center / 1px 9px, linear-gradient(90deg, #465069 48px, #d0d4dd 48px) no-repeat center / 100% 1px; }
.slider::-webkit-slider-thumb { appearance: none; width: 13px; height: 13px; border: 1px solid #465069; border-radius: 50%; background: #fff; }
.full { margin-left: 6px; }

/* Memory notice */
.toast { position: fixed; right: 6px; bottom: 93px; width: 269px; height: 75px; padding: 7px 8px 10px 15px; background: #1c202b; border: 1px solid #10131b; box-shadow: 0 0 8px rgba(0, 0, 0, .3); color: #fff; display: flex; flex-direction: column; justify-content: space-between; }
.shield { position: absolute; left: 15px; top: -12px; width: 42px; height: 42px; }
.toast strong { padding-left: 57px; font-size: 13px; line-height: 20px; font-weight: 400; }
.toast em { color: #fbdc19; }
.dismiss { position: absolute; right: 7px; top: 7px; color: #878c98; }
.toast-row { display: flex; align-items: center; justify-content: space-between; color: #747985; }
.toast-row button { width: 72px; height: 21px; justify-content: center; background: #00c279; color: #fff; }

.watermark { position: fixed; right: 7px; bottom: 7px; display: flex; align-items: center; opacity: .9; pointer-events: none; }
.watermark svg { width: 44px; height: 42px; margin-right: -2px; }
.watermark b { display: block; font: 700 21px/23px "Noto Sans CJK SC", sans-serif; color: #5c9bdc; }
.watermark span { display: block; font: 700 17px/20px "Liberation Sans", sans-serif; color: #55c176; }
```
